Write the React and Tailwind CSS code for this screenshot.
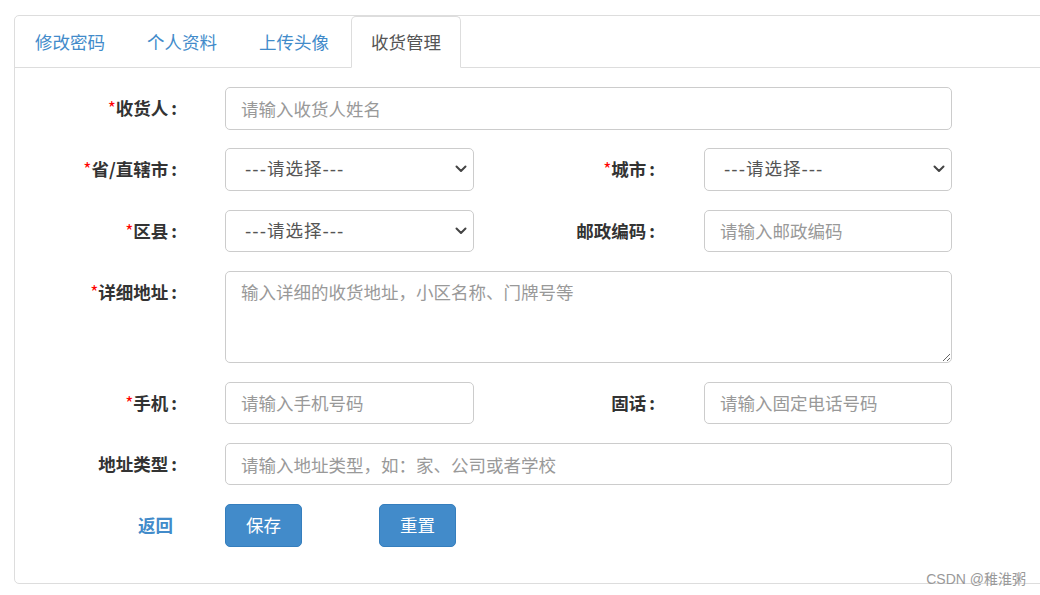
import React from "react";

const font = { fontFamily: '"Noto Sans CJK SC", "Liberation Sans", sans-serif' };
const selFont = { fontFamily: '"DejaVu Sans", "Noto Sans CJK SC", sans-serif' };

function Label({ children, req, w = "w-[162px]" }) {
  return (
    <div className={`${w} h-[42.5px] shrink-0 flex items-center justify-end text-[17.5px] font-bold text-[#333]`}>
      {req && <span className="text-[#ff0000] font-normal">*</span>}
      <span>{children}</span>
      <span className="ml-[3px]">:</span>
    </div>
  );
}

function Input({ placeholder, w }) {
  return (
    <input
      className={`${w} h-[42.5px] shrink-0 border border-[#cccccc] rounded-[5px] pl-[15px] pr-[15px] text-[17.5px] text-[#555] placeholder:text-[#999] outline-none bg-white`}
      placeholder={placeholder}
      style={font}
    />
  );
}

function Select({ w }) {
  return (
    <div className={`${w} h-[42.5px] shrink-0 relative`}>
      <select
        className="appearance-none w-full h-full border border-[#cccccc] rounded-[5px] pl-[19px] text-[17.5px] tracking-[1px] text-[#555] bg-white outline-none"
        style={selFont}
        defaultValue=""
      >
        <option value="">---请选择---</option>
      </select>
      <svg className="absolute right-[7px] top-[17px] pointer-events-none" width="12" height="8" viewBox="0 0 12 8">
        <path d="M1.5 1.5 L6 6 L10.5 1.5" fill="none" stroke="#444" strokeWidth="2" strokeLinecap="round" strokeLinejoin="round" />
      </svg>
    </div>
  );
}

export default function App() {
  const tabs = ["修改密码", "个人资料", "上传头像", "收货管理"];
  return (
    <div className="w-[1040px] h-[595px] overflow-hidden relative bg-white" style={font}>
      <div className="ml-[14px] mt-[15px] w-[1060px] h-[569px] border border-[#dddddd] rounded-[5px]">
        <div className="flex border-b border-[#dddddd]">
          {tabs.map((t, i) => (
            <div
              key={t}
              className={`h-[52px] -mb-px mr-[2px] px-[19px] flex items-center text-[17.5px] border rounded-t-[5px] ${
                i === 3
                  ? "bg-white border-[#dddddd] border-b-white text-[#555]"
                  : "border-transparent text-[#428bca]"
              }`}
            >
              {t}
            </div>
          ))}
        </div>

        <div className="pt-[19px] flex flex-col gap-[18.75px]">
          <div className="flex items-center">
            <Label req>收货人</Label>
            <div className="ml-[48px]">
              <Input placeholder="请输入收货人姓名" w="w-[727px]" />
            </div>
          </div>

          <div className="flex items-center">
            <Label req>省/直辖市</Label>
            <div className="ml-[48px]">
              <Select w="w-[249px]" />
            </div>
            <Label req w="w-[181px]">城市</Label>
            <div className="ml-[49px]">
              <Select w="w-[248px]" />
            </div>
          </div>

          <div className="flex items-center">
            <Label req>区县</Label>
            <div className="ml-[48px]">
              <Select w="w-[249px]" />
            </div>
            <Label w="w-[181px]">邮政编码</Label>
            <div className="ml-[49px]">
              <Input placeholder="请输入邮政编码" w="w-[248px]" />
            </div>
          </div>

          <div className="flex items-start">
            <Label req>详细地址</Label>
            <div className="ml-[48px]">
              <textarea
                className="block w-[727px] h-[92px] border border-[#cccccc] rounded-[5px] px-[15px] py-[7.5px] leading-[25px] text-[17.5px] text-[#555] placeholder:text-[#999] outline-none"
                placeholder="输入详细的收货地址，小区名称、门牌号等"
                style={font}
              />
            </div>
          </div>

          <div className="flex items-center">
            <Label req>手机</Label>
            <div className="ml-[48px]">
              <Input placeholder="请输入手机号码" w="w-[249px]" />
            </div>
            <Label w="w-[181px]">固话</Label>
            <div className="ml-[49px]">
              <Input placeholder="请输入固定电话号码" w="w-[248px]" />
            </div>
          </div>

          <div className="flex items-center">
            <Label>地址类型</Label>
            <div className="ml-[48px]">
              <Input placeholder="请输入地址类型，如：家、公司或者学校" w="w-[727px]" />
            </div>
          </div>

          <div className="flex items-center">
            <div className="w-[162px] h-[42.5px] pr-[4px] flex items-center justify-end text-[17.5px] font-bold text-[#428bca]">
              返回
            </div>
            <button className="ml-[48px] w-[77px] h-[42.5px] rounded-[5px] bg-[#428bca] border border-[#357ebd] text-white text-[17.5px]">
              保存
            </button>
            <button className="ml-[77px] w-[77px] h-[42.5px] rounded-[5px] bg-[#428bca] border border-[#357ebd] text-white text-[17.5px]">
              重置
            </button>
          </div>
        </div>
      </div>
      <div
        className="absolute right-[14px] top-[569px] text-[14px] text-[#999] leading-[20px]"
        style={{ fontFamily: '"Liberation Sans", "Noto Sans CJK SC", sans-serif' }}
      >
        CSDN @稚淮粥
      </div>
    </div>
  );
}
